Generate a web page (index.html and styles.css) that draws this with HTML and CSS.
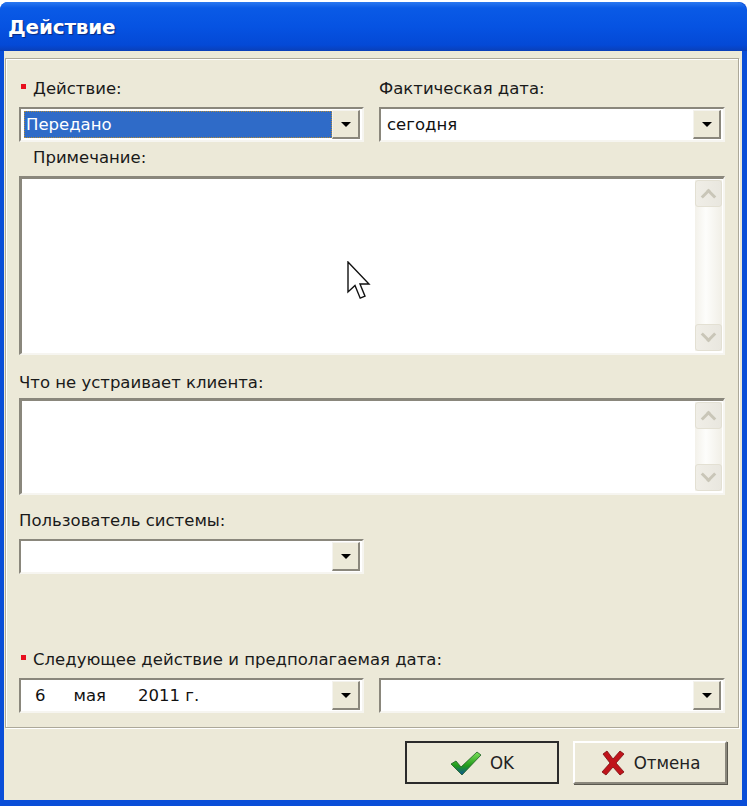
FILE: index.html
```html
<!DOCTYPE html>
<html lang="ru">
<head>
    <meta charset="UTF-8">
    <title>Действие</title>
    <link rel="stylesheet" href="styles.css">
</head>
<body>

    <div class="window">
        <div class="titlebar">
            <span class="title">Действие</span>
        </div>
        <div class="client">
            <div class="panel">
                <div class="row row-first">
                    <div class="field">
                        <div class="label"><span class="req"></span>Действие:</div>
                        <div class="combo">
                            <div class="combo-text selected">Передано</div>
                            <div class="drop"><span class="arrow"></span></div>
                        </div>
                    </div>
                    <div class="field">
                        <div class="label">Фактическая дата:</div>
                        <div class="combo">
                            <div class="combo-text">сегодня</div>
                            <div class="drop"><span class="arrow"></span></div>
                        </div>
                    </div>
                </div>

                <div class="block block-note">
                    <div class="label indent">Примечание:</div>
                    <div class="memo memo-big">
                        <div class="memo-text"></div>
                        <div class="scroll">
                            <div class="sbtn"><span class="chev up"></span></div>
                            <div class="track"></div>
                            <div class="sbtn"><span class="chev down"></span></div>
                        </div>
                    </div>
                </div>

                <div class="block block-client">
                    <div class="label label-tight">Что не устраивает клиента:</div>
                    <div class="memo memo-small">
                        <div class="memo-text"></div>
                        <div class="scroll">
                            <div class="sbtn"><span class="chev up"></span></div>
                            <div class="track"></div>
                            <div class="sbtn"><span class="chev down"></span></div>
                        </div>
                    </div>
                </div>

                <div class="row row-user">
                    <div class="field">
                        <div class="label">Пользователь системы:</div>
                        <div class="combo">
                            <div class="combo-text"></div>
                            <div class="drop"><span class="arrow"></span></div>
                        </div>
                    </div>
                </div>

                <div class="block block-next">
                    <div class="label"><span class="req"></span>Следующее действие и предполагаемая дата:</div>
                    <div class="row">
                        <div class="combo">
                            <div class="combo-text date">
                                <span class="d-day">6</span>
                                <span class="d-month">мая</span>
                                <span class="d-year">2011 г.</span>
                            </div>
                            <div class="drop"><span class="arrow"></span></div>
                        </div>
                        <div class="combo">
                            <div class="combo-text"></div>
                            <div class="drop"><span class="arrow"></span></div>
                        </div>
                    </div>
                </div>
            </div>

            <div class="buttons">
                <button class="btn btn-default">
                    <svg class="ico" width="32" height="26" viewBox="0 0 32 26">
                        <defs>
                            <linearGradient id="gchk" x1="0" y1="0" x2="0" y2="1">
                                <stop offset="0" stop-color="#7fe05a"/>
                                <stop offset="0.6" stop-color="#1f9a1a"/>
                                <stop offset="1" stop-color="#0d4f9a"/>
                            </linearGradient>
                        </defs>
                        <path d="M1 14 L6 11 L11 17 L27 2 L31 5 L12 25 Z" fill="url(#gchk)" stroke="#1b5d23" stroke-width="0.8"/>
                    </svg>
                    <span>OK</span>
                </button>
                <button class="btn">
                    <svg class="ico" width="26" height="26" viewBox="0 0 26 26">
                        <path d="M3 4 L7 1 L13 9 L20 1 L24 4 L16 13 L24 22 L20 25 L13 17 L6 25 L2 22 L10 13 Z" fill="#c0141b" stroke="#7a0a0e" stroke-width="0.8"/>
                    </svg>
                    <span>Отмена</span>
                </button>
            </div>
        </div>
    </div>

    <svg class="cursor" width="26" height="40" viewBox="0 0 13 20">
        <path d="M0.5 0.5 L0.5 15.5 L4 12.2 L6.6 18.6 L9 17.6 L6.5 11.5 L11 11.5 Z" fill="#fff" stroke="#111" stroke-width="0.7" stroke-linejoin="miter"/>
    </svg>

</body>
</html>
```

FILE: styles.css
```css
body{
    margin: 0;
    background-color: #fff;
    font-family: "DejaVu Sans", Verdana, sans-serif;
}
.window{
    position: relative;
    width: 747px;
    height: 804px;
    margin-top: 2px;
    box-sizing: border-box;
    display: flex;
    flex-direction: column;
    background-color: #0a4ed8;
    border-radius: 8px 8px 0 0;
}
.titlebar{
    height: 49px;
    display: flex;
    align-items: center;
    padding-left: 8px;
    border-radius: 8px 10px 0 0;
    background: linear-gradient(#2a78f0 0%, #0a5ae6 12%, #0653e2 50%, #0449d6 88%, #0a3fb8 100%);
}
.title{
    color: #fff;
    font-weight: bold;
    font-size: 20px;
    letter-spacing: -0.2px;
    text-shadow: 1px 1px 1px #0a2a80;
    font-family: "DejaVu Sans", Verdana, sans-serif;
}
.client{
    flex: 1;
    margin: 0 5px 6px 4px;
    background-color: #ece9d8;
    padding: 7px 3px 0 1px;
    display: flex;
    flex-direction: column;
}
.panel{
    border: 1px solid #aca899;
    box-shadow: inset 1px 1px 0 #fff, 1px 1px 0 #fff;
    padding: 19px 13px 14px 13px;
    display: flex;
    flex-direction: column;
}
.row{
    display: grid;
    grid-template-columns: 345px 346px;
    column-gap: 15px;
}
.label{
    height: 22px;
    line-height: 22px;
    margin-bottom: 7px;
    font-size: 16.5px;
    color: #1a1a1a;
    white-space: nowrap;
    display: flex;
    align-items: center;
}
.label-tight{
    margin-bottom: 4px;
}
.indent{
    padding-left: 14px;
}
.req{
    display: inline-block;
    width: 5px;
    height: 5px;
    background-color: #e8101e;
    margin-left: 2px;
    margin-right: 7px;
    margin-top: -6px;
}
.block-note{
    margin-top: 5px;
}
.block-client{
    margin-top: 17px;
}
.row-user{
    margin-top: 15px;
}
.block-next{
    margin-top: 75px;
}
.combo{
    height: 35px;
    box-sizing: border-box;
    display: flex;
    background-color: #fff;
    border-top: 2px solid #8a877c;
    border-left: 2px solid #8a877c;
    border-bottom: 2px solid #f6f5f0;
    border-right: 2px solid #f6f5f0;
    padding: 1px 2px 1px 1px;
}
.combo-text{
    flex: 1;
    display: flex;
    align-items: center;
    padding-left: 5px;
    font-size: 16.5px;
    color: #111;
}
.combo-text.selected{
    background-color: #2f6bc8;
    color: #fff;
    outline: 1px dotted #b08a3a;
    outline-offset: -1px;
    margin: 1px 0 1px 2px;
    padding-left: 2px;
}
.date{
    padding-left: 13px;
}
.d-month{
    margin-left: 28px;
}
.d-year{
    margin-left: 32px;
}
.drop{
    width: 28px;
    box-sizing: border-box;
    background-color: #ece9d8;
    border-top: 1px solid #f4f3ee;
    border-left: 1px solid #f4f3ee;
    border-right: 2px solid #8a877c;
    border-bottom: 2px solid #8a877c;
    display: flex;
    align-items: center;
    justify-content: center;
}
.arrow{
    width: 0;
    height: 0;
    border-left: 5px solid transparent;
    border-right: 5px solid transparent;
    border-top: 5px solid #000;
}
.memo{
    box-sizing: border-box;
    display: flex;
    background-color: #fff;
    border-top: 3px solid #8a877c;
    border-left: 3px solid #8a877c;
    border-bottom: 2px solid #f6f5f0;
    border-right: 2px solid #f6f5f0;
    padding: 1px 1px 2px 0;
}
.memo-big{
    height: 179px;
}
.memo-small{
    height: 97px;
}
.memo-text{
    flex: 1;
}
.scroll{
    width: 27px;
    display: flex;
    flex-direction: column;
    background: linear-gradient(to right, #f3f1ea, #fdfdfb 40%, #f1efe7);
}
.sbtn{
    height: 27px;
    box-sizing: border-box;
    border: 1px solid #e3e0d3;
    border-radius: 3px;
    background: linear-gradient(to right, #f0eee7, #e9e7df);
    display: flex;
    align-items: center;
    justify-content: center;
}
.track{
    flex: 1;
}
.chev{
    width: 8px;
    height: 8px;
    border-top: 3px solid #c9c6b8;
    border-left: 3px solid #c9c6b8;
}
.chev.up{
    transform: rotate(45deg);
    margin-top: 6px;
}
.chev.down{
    transform: rotate(225deg);
    margin-top: -6px;
}
.buttons{
    display: flex;
    justify-content: flex-end;
    gap: 14px;
    padding-top: 13px;
    padding-right: 12px;
}
.btn{
    width: 154px;
    height: 43px;
    box-sizing: border-box;
    background-color: #ece9d8;
    border: 2px solid;
    border-color: #fff #8a877c #8a877c #fff;
    box-shadow: 1px 1px 0 #5a584f;
    display: flex;
    align-items: center;
    justify-content: center;
    gap: 8px;
    font-family: "DejaVu Sans Condensed", "DejaVu Sans", sans-serif;
    font-stretch: condensed;
    font-size: 18.5px;
    color: #222;
    padding: 0;
}
.btn-default{
    outline: 2px solid #2b2b2b;
    outline-offset: -2px;
    border-color: #fff #8a877c #8a877c #fff;
    box-shadow: none;
}
.ico{
    display: block;
}
.cursor{
    position: absolute;
    left: 347px;
    top: 261px;
}
```
